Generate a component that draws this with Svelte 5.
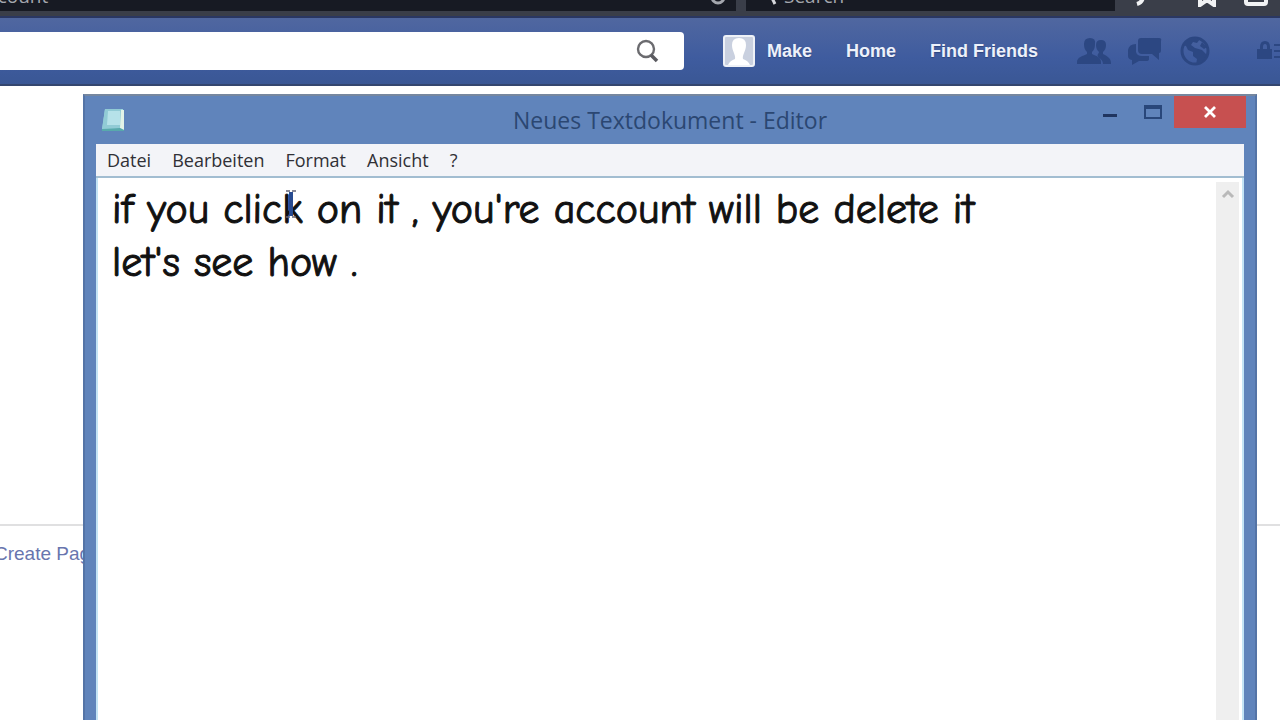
<script>
  const menuItems = ["Datei", "Bearbeiten", "Format", "Ansicht", "?"];

  let address = "account";
  let webSearch = "Search";
  let query = "";
  let note = "if you click on it , you're account will be delete it\nlet's see how .";
</script>

<div class="page">
  <div class="toolbar">
    <input class="address" aria-label="Address" bind:value={address} />
    <svg class="reload" width="16" height="16" viewBox="0 0 16 16"><circle cx="8" cy="8" r="6" /></svg>
    <div class="web-search">
      <svg width="14" height="18" viewBox="0 0 14 18"><circle cx="8" cy="5" r="4" /><path d="M5 8 9 16" /></svg>
      <input aria-label="Web search" bind:value={webSearch} />
    </div>
    <div class="tools">
      <svg width="16" height="24" viewBox="0 0 16 24"><path d="M11 10Q12 19 5 21" /></svg>
      <svg class="star" width="22" height="24" viewBox="0 0 22 24"><path d="M4 4H18V22L11 17 4 22Z" /></svg>
      <svg width="24" height="24" viewBox="0 0 24 24"><path d="M2 6V19Q2 21 4 21H20Q22 21 22 19V6M3 15H21" /></svg>
    </div>
  </div>

  <header>
    <form class="search" on:submit|preventDefault>
      <input aria-label="Search" bind:value={query} />
      <button aria-label="Search">
        <svg width="26" height="26" viewBox="0 0 26 26">
          <circle cx="12" cy="11" r="8" fill="none" stroke="#6b6b6f" stroke-width="2.4" />
          <path d="m17 17 6 6" stroke="#5b5b60" stroke-width="3.6" />
        </svg>
      </button>
    </form>
    <nav>
      <a class="profile" href="#profile">
        <svg width="32" height="32" viewBox="0 0 32 32">
          <rect x="1" y="1" width="30" height="30" rx="2" fill="#c9d0df" stroke="#eef1f7" stroke-width="2" />
          <path d="M5 30C6 27 9 25 12 24 13 20 9 16 9 10Q9 3 16 3T23 10C23 16 19 20 20 24 23 25 26 27 27 30Z" fill="#fff" />
        </svg>
        Make
      </a>
      <a href="#home">Home</a>
      <a href="#friends">Find Friends</a>
    </nav>
    <div class="alerts">
      <button aria-label="Friend requests">
        <svg width="34" height="30" viewBox="0 0 34 30">
          <path d="M21 21Q20 19 21 18 22 17 22 16C20 14 19 12 19 9Q19 4 24 4T29 9C29 12 28 14 26 16V18C30 20 34 22 34 27V28H26Q26 24 21 21Z" />
          <path d="M0 28V26C0 21 6 20 10 18V16C8 14 7 12 7 8Q7 2 13 2T18 8C18 12 17 14 15 16V18C19 20 24 21 24 26V28Z" />
        </svg>
      </button>
      <button aria-label="Messages">
        <svg width="34" height="30" viewBox="0 0 34 30">
          <path d="M13 2H31Q34 2 33 5V15Q33 17 31 17V24L24 18H14Q10 18 10 14V5Q10 2 13 2Z" />
          <path d="M8 8V16Q9 20 14 20H21V23Q21 25 18 25H11L4 29V24Q0 23 0 20V14Q1 8 8 8Z" />
        </svg>
      </button>
      <button aria-label="Notifications">
        <svg width="32" height="32" viewBox="0 0 32 32">
          <circle cx="16" cy="16" r="13" fill="none" stroke="#2c4782" stroke-width="3" />
          <path d="M4 10 11 3Q16 1 21 4L18 8 14 7 12 10 16 13 23 15 28 20 23 27 17 30 18 24 14 21 14 17 9 15 7 11Z" />
          <path d="m23 7 5 5-3 2-4-3Z" />
        </svg>
      </button>
      <button class="privacy" aria-label="Privacy shortcuts">
        <svg width="30" height="24" viewBox="0 0 30 24">
          <path d="M1 10H4V8Q4 2 9 2T14 8V10H16V20H1ZM7 10H11V8Q11 5 9 5T7 8Z" fill-rule="evenodd" />
          <path d="M18 5H30V7H18ZM18 11H30V13H18ZM18 17H30V19H18Z" />
        </svg>
      </button>
    </div>
  </header>

  <main></main>
  <footer><a href="#create">Create Page</a></footer>

  <section class="window">
    <div class="titlebar">
      <svg class="app-icon" width="26" height="26" viewBox="0 0 26 26">
        <path d="M5 2H23L24 23H2Z" fill="#9ed8df" />
        <path d="M5 2H21V21L2 22Z" fill="#91cbd5" />
        <path d="M8 4H20V18H7Z" fill="#b6e2e9" />
        <path d="M21 3H24V23L20 21Z" fill="#e2f3e7" />
        <path d="M2 22 20 21 24 23V24H2Z" fill="#58a9ac" />
      </svg>
      <h1>Neues Textdokument - Editor</h1>
      <div class="controls">
        <button aria-label="Minimize"><svg width="14" height="14" viewBox="0 0 14 14"><path d="M0 9H14V12H0Z" fill="#20355f" /></svg></button>
        <button aria-label="Maximize"><svg width="18" height="14" viewBox="0 0 18 14"><path d="M1 1H17V13H1Z" fill="none" stroke="#29477a" stroke-width="2" /><path d="M1 0H17V4H1Z" fill="#29477a" /></svg></button>
        <button class="close" aria-label="Close"><svg width="14" height="12" viewBox="0 0 14 12"><path d="m2 1 10 10M12 1 2 11" stroke="#fff" stroke-width="2.8" /></svg></button>
      </div>
    </div>
    <div class="menu">
      {#each menuItems as item}
        <button>{item}</button>
      {/each}
    </div>
    <div class="editor">
      <textarea aria-label="Text" spellcheck="false" wrap="off" bind:value={note}></textarea>
      <div class="scrollbar">
        <button aria-label="Scroll up"><svg width="14" height="10" viewBox="0 0 14 10"><path d="m2 8 5-5 5 5" fill="none" stroke="#b9b9b9" stroke-width="3" /></svg></button>
      </div>
      <svg class="caret" width="12" height="28" viewBox="0 0 12 28">
        <path d="M1 1H5M7 1H11M1 27H5M7 27H11" stroke="#667" stroke-width="1.5" />
        <path d="M6 2V26" stroke="#284b91" stroke-width="4" />
      </svg>
    </div>
  </section>
</div>

<style>
  :global(body) {
    margin: 0;
    background: #fff;
  }
  .page {
    position: relative;
    display: flex;
    flex-direction: column;
    height: 100vh;
    overflow: hidden;
    font-family: "Liberation Sans", Arial, sans-serif;
  }
  button,
  input,
  textarea {
    box-sizing: border-box;
    border: 0;
    padding: 0;
    outline: 0;
    background: none;
    font: inherit;
  }
  a {
    text-decoration: none;
  }
  svg {
    display: block;
    flex: none;
  }

  .toolbar {
    display: flex;
    align-items: flex-end;
    height: 11px;
    padding-bottom: 5px;
    overflow: hidden;
    background: #3a3e49;
    border-bottom: 2px solid #2a3762;
    color: #a4a7ae;
    font-family: "Open Sans", "Segoe UI", sans-serif;
    font-size: 19px;
  }
  .toolbar input {
    height: 30px;
    color: inherit;
    background: #171a23;
  }
  .toolbar .address {
    flex: 1;
    min-width: 0;
    margin-left: -22px;
  }
  .reload {
    padding: 8px 10px 6px 0;
    background: #171a23;
    fill: none;
    stroke: #a4a7ae;
    stroke-width: 3;
  }
  .web-search {
    display: flex;
    align-items: flex-end;
    width: 369px;
    box-sizing: border-box;
    margin-left: 10px;
    padding-left: 20px;
    background: #171a23;
  }
  .web-search svg {
    margin-bottom: 5px;
    fill: none;
    stroke: #d6d8dc;
    stroke-width: 3;
  }
  .web-search input {
    flex: 1;
    min-width: 0;
    padding-left: 4px;
  }
  .tools {
    display: flex;
    justify-content: flex-end;
    gap: 26px;
    width: 165px;
    padding-right: 12px;
    box-sizing: border-box;
    fill: none;
    stroke: #f1f2f4;
    stroke-width: 4;
  }
  .tools svg {
    margin-bottom: 4px;
  }
  .star {
    margin-left: 22px;
  }

  header {
    display: flex;
    align-items: center;
    height: 66px;
    background: linear-gradient(#5067a0, #3f5c9f 60%, #3a5795);
    border-bottom: 2px solid #34466f;
  }
  .search {
    display: flex;
    flex: 1;
    min-width: 0;
    height: 38px;
    background: #fff;
    border-radius: 0 4px 4px 0;
  }
  .search input {
    flex: 1;
    min-width: 0;
    padding-left: 12px;
    font-size: 19px;
  }
  .search button {
    padding: 0 24px;
  }
  nav {
    display: flex;
    align-items: center;
    gap: 34px;
    margin-left: 39px;
    white-space: nowrap;
  }
  nav a {
    color: #edf1fa;
    font-size: 18px;
    font-weight: bold;
    text-shadow: 0 1px 1px #2c457f;
  }
  .profile {
    display: flex;
    align-items: center;
    gap: 12px;
  }
  .alerts {
    display: flex;
    align-items: center;
    gap: 17px;
    margin-left: 39px;
    fill: #2c4782;
  }
  .privacy {
    width: 24px;
    margin-left: 28px;
    overflow: hidden;
  }

  main {
    flex: 1;
  }
  footer {
    height: 194px;
    border-top: 2px solid #e0e0e1;
  }
  footer a {
    display: inline-block;
    margin: 16px 0 0 -6px;
    color: #6875ae;
    font-size: 19px;
    line-height: 24px;
  }

  .window {
    position: absolute;
    top: 94px;
    right: 23px;
    bottom: 0;
    left: 83px;
    display: flex;
    flex-direction: column;
    padding: 0 11px;
    background: #6084bb;
    border: 2px solid #5474a6;
    border-top-color: #76879f;
    border-bottom: 0;
  }
  .titlebar {
    display: grid;
    grid-template-columns: 1fr auto 1fr;
    align-items: center;
    height: 48px;
  }
  .app-icon {
    margin-left: 4px;
  }
  h1 {
    margin: 0;
    color: #2b4772;
    font-family: "Open Sans", "Segoe UI", sans-serif;
    font-size: 23px;
    font-weight: 400;
    line-height: 46px;
    white-space: nowrap;
  }
  .controls {
    display: flex;
    align-self: start;
    justify-content: flex-end;
    margin-right: -2px;
  }
  .controls button {
    display: flex;
    align-items: center;
    justify-content: center;
    width: 43px;
    height: 32px;
  }
  .controls .close {
    width: 72px;
    background: #c75050;
  }
  .menu {
    display: flex;
    gap: 21px;
    height: 32px;
    padding: 0 11px;
    background: #f3f4f8;
    border-bottom: 2px solid #a2bdd1;
  }
  .menu button {
    color: #303036;
    font-family: "Open Sans", "Segoe UI", sans-serif;
    font-size: 18px;
  }
  .editor {
    position: relative;
    display: flex;
    flex: 1;
    min-height: 0;
    background: #fff;
    border: solid #c4e4f5;
    border-width: 0 2px;
  }
  textarea {
    flex: 1;
    min-width: 0;
    padding: 5px 14px;
    overflow: hidden;
    resize: none;
    color: #111;
    font-family: "Comic Sans MS", "Comic Neue", "Noto Sans", sans-serif;
    font-size: 42px;
    line-height: 53px;
    -webkit-text-stroke: 1px #111;
  }
  .scrollbar {
    width: 23px;
    margin: 4px 3px 0 0;
    background: #efefef;
  }
  .scrollbar button {
    display: flex;
    align-items: center;
    justify-content: center;
    width: 100%;
    height: 24px;
  }
  .caret {
    position: absolute;
    top: 12px;
    left: 187px;
  }
</style>
